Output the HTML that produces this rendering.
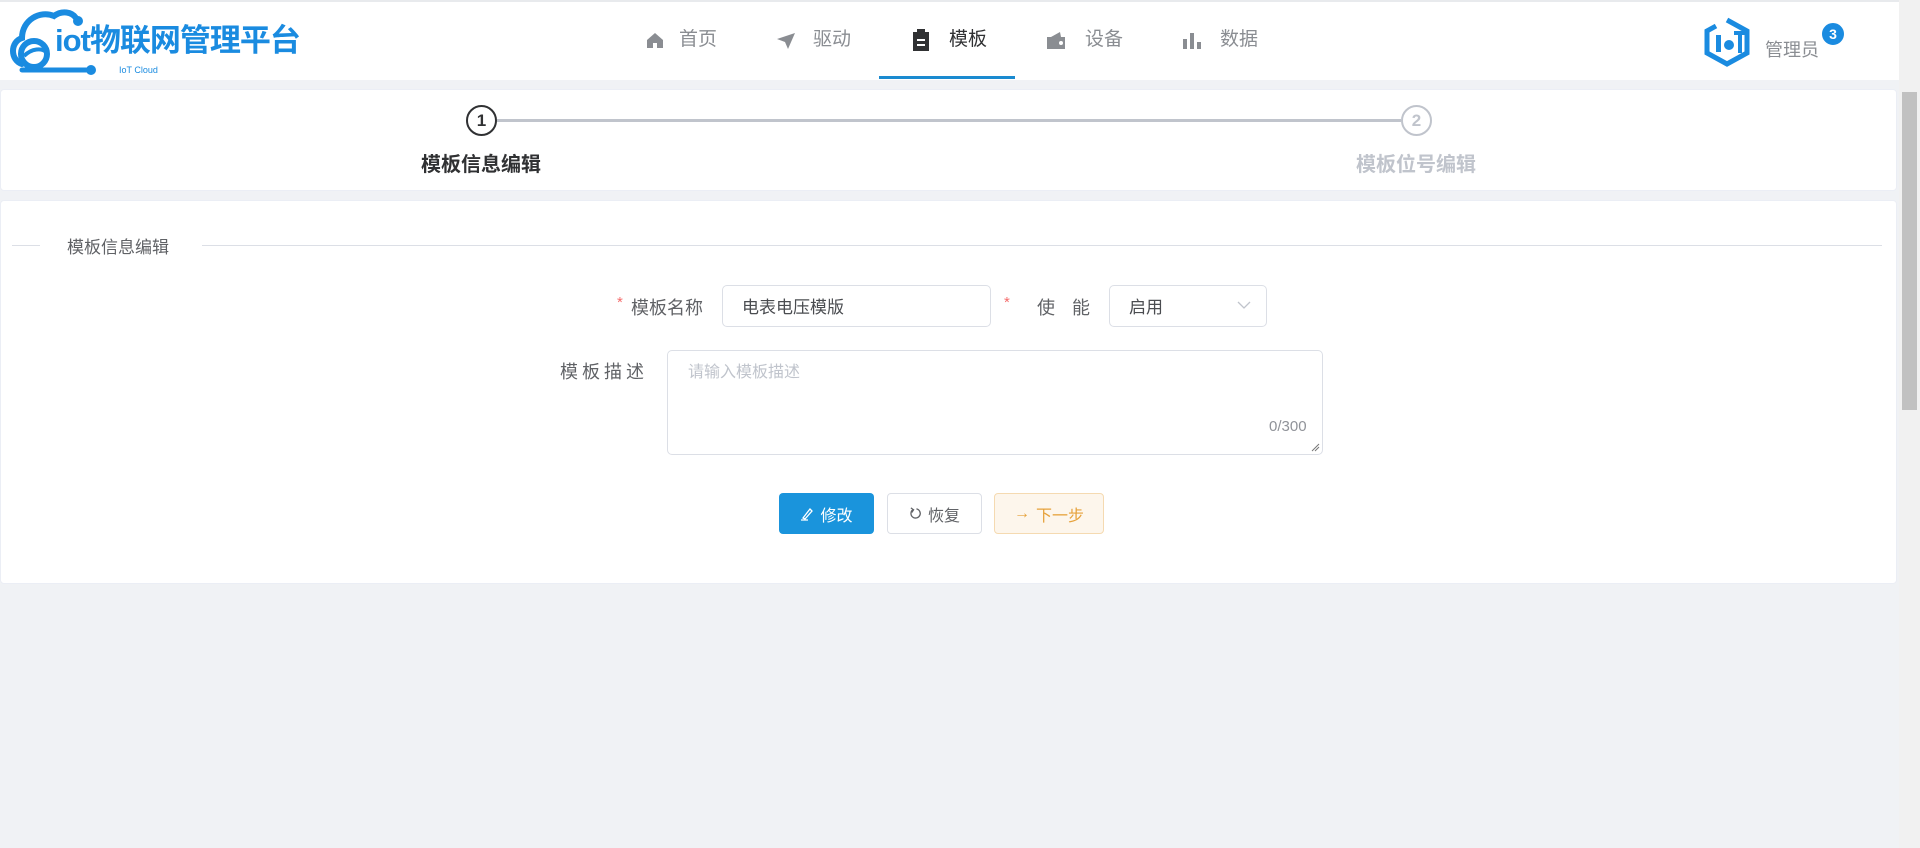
<!DOCTYPE html>
<html><head><meta charset="utf-8">
<style>
*{box-sizing:border-box;margin:0;padding:0}
body{width:1920px;height:848px;background:#f0f2f5;font-family:"Liberation Sans","Noto Sans CJK SC",sans-serif;position:relative;overflow:hidden;color:#606266}
.abs{position:absolute}
.header{left:0;top:0;width:1899px;height:80px;background:#fff;border-top:2px solid #e8eaed}
.nav{top:27px;font-size:19px;color:#8a8d92;line-height:26px}
.card{background:#fff;border-radius:4px;border:1px solid #ebeef5}
.inp{border:1px solid #dcdfe6;border-radius:5px;background:#fff}
.btn{border-radius:4px;font-size:16px;display:flex;align-items:center;justify-content:center}
</style></head><body>
<div class="abs header"></div>
<!-- logo -->
<svg class="abs" style="left:6px;top:4px" width="100" height="76" viewBox="0 0 100 76">
<path d="M16 60 C4 56 4 38 16 34 C16 16 34 6 48 12 C56 6 66 8 70 14" fill="none" stroke="#1a8be0" stroke-width="6" stroke-linecap="round"/>
<circle cx="72" cy="17" r="5" fill="#1a8be0"/>
<path d="M16 66 L84 66" stroke="#1a8be0" stroke-width="5" stroke-linecap="round"/>
<circle cx="85" cy="66" r="5" fill="#1a8be0"/>
<circle cx="28" cy="50" r="13" fill="none" stroke="#1a8be0" stroke-width="6"/>
<path d="M18 52 C26 44 36 44 40 48" stroke="#1a8be0" stroke-width="4" fill="none"/>
</svg>
<div class="abs" style="left:55px;top:22px;font-size:31px;font-weight:bold;color:#1a8be0;letter-spacing:-1px;line-height:38px">iot物联网管理平台</div>
<div class="abs" style="left:119px;top:65px;font-size:9px;color:#1a8be0">IoT Cloud</div>
<!-- nav -->
<svg class="abs" style="left:646px;top:32px" width="18" height="17" viewBox="0 0 18 17"><path d="M9 1 L17 8 V16 H11 V11 H7 V16 H1 V8Z" fill="#8a8d92"/></svg>
<div class="abs nav" style="left:679px">首页</div>
<svg class="abs" style="left:776px;top:32px" width="20" height="18" viewBox="0 0 20 18"><path d="M1 7 L19 1 L12 17 L9 10Z" fill="#8a8d92"/></svg>
<div class="abs nav" style="left:813px">驱动</div>
<svg class="abs" style="left:913px;top:29px" width="16" height="22" viewBox="0 0 16 22"><rect x="0" y="3" width="16" height="19" fill="#303133"/><rect x="4" y="0" width="8" height="5" fill="#303133"/><rect x="4" y="10" width="8" height="2" fill="#fff"/><rect x="4" y="15" width="8" height="2" fill="#fff"/></svg>
<div class="abs nav" style="left:949px;color:#303133">模板</div>
<div class="abs" style="left:879px;top:76px;width:136px;height:3px;background:#1a8ad0"></div>
<svg class="abs" style="left:1046px;top:32px" width="20" height="17" viewBox="0 0 20 17"><path d="M1 5 H19 V17 H1Z M5 5 L14 0 L15 5" fill="#8a8d92"/><circle cx="15" cy="11" r="2" fill="#fff"/></svg>
<div class="abs nav" style="left:1085px">设备</div>
<svg class="abs" style="left:1183px;top:32px" width="18" height="17" viewBox="0 0 18 17"><rect x="0" y="7" width="4" height="10" fill="#8a8d92"/><rect x="7" y="1" width="4" height="16" fill="#8a8d92"/><rect x="14" y="10" width="4" height="7" fill="#8a8d92"/></svg>
<div class="abs nav" style="left:1220px">数据</div>
<!-- admin -->
<svg class="abs" style="left:1702px;top:17px" width="50" height="50" viewBox="0 0 50 50">
<path d="M25 3 L45 14 V36 L25 47 L5 36 V14 L14 9" fill="none" stroke="#1a8be0" stroke-width="5"/>
<rect x="14" y="18" width="5" height="17" fill="#1a8be0"/><circle cx="27" cy="28" r="5" fill="#1a8be0"/>
<rect x="32" y="14" width="12" height="4" fill="#1a8be0"/><rect x="36" y="14" width="4" height="22" fill="#1a8be0"/></svg>
<div class="abs" style="left:1765px;top:36px;font-size:18px;color:#8a8d92">管理员</div>
<div class="abs" style="left:1821px;top:22px;width:24px;height:24px;border-radius:12px;background:#1a8be0;border:1px solid #fff;color:#fff;font-size:14px;font-weight:bold;text-align:center;line-height:22px">3</div>
<!-- scrollbar -->
<div class="abs" style="left:1899px;top:0;width:21px;height:848px;background:#f1f1f1"></div>
<div class="abs" style="left:1902px;top:92px;width:15px;height:318px;background:#c1c1c1"></div>
<!-- steps card -->
<div class="abs card" style="left:0;top:89px;width:1897px;height:102px"></div>
<div class="abs" style="left:497px;top:119px;width:904px;height:3px;background:#c0c4cc"></div>
<div class="abs" style="left:466px;top:105px;width:31px;height:31px;border-radius:50%;border:2px solid #303133;background:#fff;font-size:17px;font-weight:bold;color:#303133;text-align:center;line-height:27px">1</div>
<div class="abs" style="left:1401px;top:105px;width:31px;height:31px;border-radius:50%;border:2px solid #c0c4cc;background:#fff;font-size:17px;font-weight:bold;color:#c0c4cc;text-align:center;line-height:27px">2</div>
<div class="abs" style="left:381px;top:148px;width:200px;text-align:center;font-size:20px;font-weight:bold;color:#303133">模板信息编辑</div>
<div class="abs" style="left:1316px;top:148px;width:200px;text-align:center;font-size:20px;font-weight:bold;color:#c0c4cc">模板位号编辑</div>
<!-- form card -->
<div class="abs card" style="left:0;top:200px;width:1897px;height:384px"></div>
<div class="abs" style="left:12px;top:245px;width:28px;height:1px;background:#dcdfe6"></div>
<div class="abs" style="left:67px;top:233px;font-size:17px;color:#606266">模板信息编辑</div>
<div class="abs" style="left:202px;top:245px;width:1680px;height:1px;background:#dcdfe6"></div>
<div class="abs" style="left:617px;top:294px;color:#f56c6c;font-size:15px">*</div>
<div class="abs" style="left:631px;top:294px;font-size:18px">模板名称</div>
<div class="abs inp" style="left:722px;top:285px;width:269px;height:42px"></div>
<div class="abs" style="left:742px;top:293px;font-size:17px;color:#4a4c50">电表电压模版</div>
<div class="abs" style="left:1004px;top:294px;color:#f56c6c;font-size:15px">*</div>
<div class="abs" style="left:1037px;top:294px;font-size:18px;letter-spacing:17px">使能</div>
<div class="abs inp" style="left:1109px;top:285px;width:158px;height:42px"></div>
<div class="abs" style="left:1129px;top:293px;font-size:17px;color:#4a4c50">启用</div>
<svg class="abs" style="left:1237px;top:300px" width="14" height="10" viewBox="0 0 14 10"><path d="M1 2 L7 8 L13 2" fill="none" stroke="#c0c4cc" stroke-width="1.3"/></svg>
<div class="abs" style="left:560px;top:358px;font-size:18px;letter-spacing:4px">模板描述</div>
<div class="abs inp" style="left:667px;top:350px;width:656px;height:105px"></div>
<div class="abs" style="left:688px;top:358px;font-size:16px;color:#c0c4cc">请输入模板描述</div>
<div class="abs" style="left:1269px;top:418px;font-size:15px;color:#909399">0/300</div>
<svg class="abs" style="left:1310px;top:442px" width="10" height="10"><path d="M2 9 L9 2 M5 9 L9 5" stroke="#777" stroke-width="1"/></svg>
<div class="abs btn" style="left:779px;top:493px;width:95px;height:41px;background:#1a94dc;color:#fff">
<svg width="14" height="14" viewBox="0 0 14 14" style="margin-right:6px"><path d="M3 11 L10 2 L12 4 L5 12 Z M1 13 H8" fill="none" stroke="#fff" stroke-width="1.3"/></svg>修改</div>
<div class="abs btn" style="left:887px;top:493px;width:95px;height:41px;background:#fff;border:1px solid #dcdfe6;color:#606266">
<svg width="13" height="13" viewBox="0 0 14 14" style="margin-right:6px"><path d="M4 3 A5 5 0 1 0 8 2" fill="none" stroke="#606266" stroke-width="1.4"/><path d="M2 1 L5 3 L3 6" fill="none" stroke="#606266" stroke-width="1.3"/></svg>恢复</div>
<div class="abs btn" style="left:994px;top:493px;width:110px;height:41px;background:#fdf6ec;border:1px solid #f5dab1;color:#e6a23c">
<span style="margin-right:6px">→</span>下一步</div>
</body></html>
